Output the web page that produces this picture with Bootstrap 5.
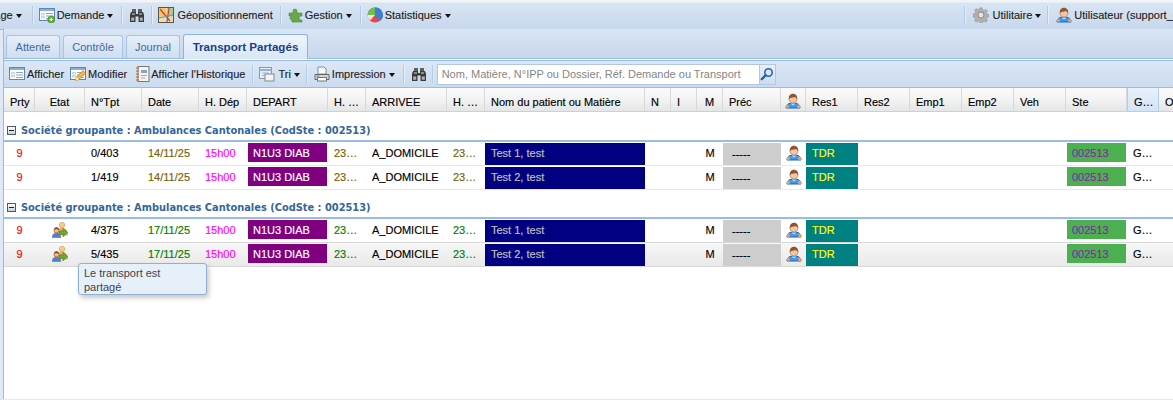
<!DOCTYPE html>
<html lang="fr"><head><meta charset="utf-8"><title>Transport Partagés</title>
<link href="https://cdn.jsdelivr.net/npm/bootstrap@5.3.0/dist/css/bootstrap.min.css" rel="stylesheet">
<style>
html,body{height:400px;overflow:hidden;background:#fff}
body{font:11px/14px "Liberation Sans",Arial,sans-serif;color:#222;position:relative}
.ic{width:16px;height:16px;flex:none;display:block}
.topbar{height:30px;padding:2px 0 1px;background:linear-gradient(#f1f3f6 0,#f1f3f6 2px,#d8e5f4 3px,#c7d7ec 100%);border-bottom:1px solid #99bbe8;white-space:nowrap;overflow:hidden;-webkit-text-stroke:.12px #222}
.mitem{gap:2px;color:#222;font-size:11px}
.gap1{gap:1px}
.dropdown-toggle::after{border-top:4px solid #111;border-left:3px solid transparent;border-right:3px solid transparent;margin-left:3px;vertical-align:1px}
.vsep{width:1px;height:18px;background:#aecbed;box-shadow:1px 0 0 #e6eef8;flex:none}
.first{margin-left:-33px}
.l1{margin-left:1px}.l2{margin-left:2px}.l4{margin-left:4px}.l5{margin-left:5px}.l6{margin-left:6px}.l7{margin-left:7px}.l8{margin-left:8px}.l9{margin-left:9px}.l10{margin-left:10px}.lbig{margin-left:513px}
.frame{position:absolute;left:0;top:30px;right:0;bottom:0;padding-left:3px;background:#dfe8f6}
.inner{border-left:1px solid #99bbe8;height:100%;background:#fff}
.tabstrip.nav-tabs{height:30px;padding:6px 0 0 2px;gap:3px;background:linear-gradient(#d9e5f4,#c7d7ec);border-bottom:1px solid #99bbe8;flex-wrap:nowrap;margin-top:-1px;--bs-nav-tabs-border-width:0}
.tabstrip .nav-link{height:23px;padding:4px 0 0;text-align:center;font-size:11px;color:#416aa3;background:linear-gradient(#e6eef9,#d0def1);border:1px solid #a9c3e6;border-bottom:0;border-radius:3px 3px 0 0;margin:0}
.tabstrip .nav-link.active{height:25px;font-size:11.6px;font-weight:700;color:#15428b;background:linear-gradient(#f0f5fc,#d9e6f6);border-color:#8db2e3;padding-top:5px;margin-top:-1px;position:relative;z-index:1}
.w1{width:54px}.w2{width:60px}.w3{width:54px}.w4{width:125px}
.tbar{height:28px;margin-top:1px;padding-left:5px;border-top:1px solid #99bbe8;border-bottom:1px solid #99bbe8;background:linear-gradient(#dce7f6,#cbdbef);white-space:nowrap;font-size:11px;color:#222;-webkit-text-stroke:.12px #222}
.tbar .vsep{height:18px}
.sbox{width:340px;height:21px;-webkit-text-stroke:0}
.sbox .form-control{flex:none;width:323px;height:21px;min-height:0;padding:0 4px;border:1px solid #b5c7e0;border-radius:0;font-size:11px;box-shadow:none}
.sbox .form-control::placeholder{color:#858585;opacity:1}
.sbox .sbtn{width:17px;height:21px;background:linear-gradient(#e9f0fa,#ccdcf0);border:1px solid #b5c7e0;border-left:0;display:flex;align-items:center;justify-content:center;padding:0}
.gridwrap{overflow:hidden;width:1169px}
.tb{table-layout:fixed;width:1215px;border-collapse:separate;border-spacing:0;font-size:11px;color:#000;-webkit-text-stroke:.15px}
.tb th{height:24px;padding:4px 0 0 6px;font-weight:400;color:#000;font-size:11px;white-space:nowrap;overflow:hidden;background:linear-gradient(#fafafa,#f3f3f3 50%,#e4e5e7);border-right:1px solid #d8d8d8;border-bottom:1px solid #d0d0d0}
.tb th.cur{background:linear-gradient(#e9f1fb,#d4e3f6);border:1px solid #b3cdec;border-top:0}
.tb td{height:24px;padding:1px 0 0 6px;border-bottom:1px solid #e8e8e8;white-space:nowrap;overflow:hidden;vertical-align:top;line-height:21px;font-size:11px}
.tb td.fill{padding:1px 0 0}
.hl td{background:linear-gradient(#f7f7f7,#e9e9e9);border-bottom-color:#d9d9d9}
.prev td{border-bottom-color:#d8d8d8}
.tb .grp td{background:#fff;height:30px;padding:11px 0 0 3px;border-bottom:2px solid #99bbe8;line-height:16px;font-weight:700;color:#336699;font-family:"DejaVu Sans",sans-serif;font-size:9.85px;-webkit-text-stroke:0}
.tb .grp.g2 td{height:29px;padding-top:10px}
.grp .tog{display:inline-block;vertical-align:-1px;width:9px;height:9px;border:1px solid #4a5a70;background:linear-gradient(#fff,#c5cfdc);position:relative;margin-right:5px}
.grp .tog::after{content:"";position:absolute;left:1px;right:1px;top:3px;height:1px;background:#222}
.ctr{text-align:center;padding-left:0!important}
.red{color:#f00}.olive{color:#7b6000}.grn{color:#008000}.mag{color:#f0f}
.bx{height:22px;padding-left:6px;display:block}
.bdep{background:#800080;color:#fff;height:19px;line-height:21px;margin:0 1px;padding-left:5px;overflow:hidden}
.bpat{background:navy;color:#c0c0c0;padding-left:6px}
.bpre{background:#cdcdcd;padding-left:9px;color:#000;line-height:23px}
.bres{background:teal;color:#ff0;padding-left:6px}
.bste{background:#4caf50;color:#8e24aa;height:19px;line-height:21px;margin:0 1px;padding-left:5px;overflow:hidden}
.tb .icell{padding-top:3px;padding-left:0}
.icell .ic{margin:0 auto}
.tip-box{position:absolute;left:78px;top:263px;width:129px;height:32px;padding:2px 5px;background:#e6f0fb;border:1px solid #8fb0d8;border-radius:3px;box-shadow:2px 3px 5px rgba(0,0,0,.22);color:#444;font-size:11px;line-height:13.5px;z-index:5;padding-top:3px}
</style></head><body>
<svg width="0" height="0" class="d-block position-absolute"><defs>
<symbol id="u" viewBox="0 0 16 16"><path d="M1 15c0-3.500 2.500-5 7-5s7 1.500 7 5z" fill="#3f9bf0" stroke="#1d5fb0"/><path d="M5.500 10.500 8 12.500l2.500-2z" fill="#bfe0ff"/><path d="M.8 13.500c.5-1.500 1.500-2 2.500-2.300l.5 3.800H1.500zM15.200 13.500c-.5-1.500-1.500-2-2.500-2.300l-.5 3.800h2.800z" fill="#e8a070"/><circle cx="8" cy="6" r="4" fill="#f3c6a3" stroke="#a9703f" stroke-width=".5"/><path d="M3.800 6.800C3.300 2.300 6 .8 8 .8s4.700 1.500 4.200 6C11.700 4.600 10 4.200 8 4.400S4.300 4.600 3.800 6.800z" fill="#93532a"/></symbol>
<symbol id="bin" viewBox="0 0 16 16"><path d="M3 2h4v3H3zM9 2h4v3H9z" fill="#5f5f5f"/><path d="M2 5h5v2h2V5h5l1 3v7H9.500V9.500h-3V15H1V8z" fill="#3c3c3c"/><path d="M2.200 10.500h3v3.300h-3zM10.800 10.500h3v3.300h-3z" fill="#b2b2b2"/><path d="M3 6h3v2H3zM10 6h3v2h-3z" fill="#8a8a8a"/></symbol>
<symbol id="form" viewBox="0 0 16 16"><rect x=".5" y="1.500" width="15" height="12" fill="#fff" stroke="#5a86bd"/><rect x="1" y="2" width="14" height="2" fill="#88aedb"/><path d="M2.500 6.500h3v1.500h-3zM2.500 9.500h3V11h-3z" fill="#fff" stroke="#8aa" stroke-width=".5"/><path d="M7 6.500h7M7 9h7M7 11.500h7" stroke="#8fa5c0"/></symbol>
<symbol id="fadd" viewBox="0 0 16 16"><use href="#form"/><circle cx="12.300" cy="12.500" r="3.500" fill="#59b13a" stroke="#3d8a25" stroke-width=".6"/><path d="M10.500 12.500h3.600M12.300 10.700v3.600" stroke="#fff" stroke-width="1.200"/></symbol>
<symbol id="fedit" viewBox="0 0 16 16"><use href="#form"/><path d="M5.500 14.800 6.500 11 13 4.500 15.500 7 9 13.500z" fill="#f1b93d" stroke="#a66f12" stroke-width=".6"/><path d="M5.500 14.800 6.500 11 9 13.500z" fill="#fbe6c0"/></symbol>
<symbol id="map" viewBox="0 0 16 16"><rect x=".5" y=".5" width="15" height="15" fill="#e8e0a8" stroke="#555"/><path d="M1 1h6l3 8-9 2z" fill="#f0c868"/><path d="M9 1h6v8l-5 1z" fill="#a9cf8f"/><path d="M2 2l10 12M11 1 9 15" stroke="#d33" stroke-width="1.200" fill="none"/><path d="M1 11l14-3" stroke="#5a9ae0"/></symbol>
<symbol id="puz" viewBox="0 0 16 16"><path d="M1 6h4V4a2 2 0 1 1 4 0v2h5v3h-1a2 2 0 1 0 0 4h1v2H4v-2a2 2 0 1 1 0-4H1z" fill="#66a84a" stroke="#4c8a3a" stroke-width=".6"/></symbol>
<symbol id="pie" viewBox="0 0 16 16"><circle cx="8" cy="8" r="7.500" fill="#e04a4a"/><path d="M8 8V.5A7.500 7.500 0 0 1 13 14z" fill="#3f7fd0"/><path d="M8 8 .5 8A7.500 7.500 0 0 1 8 .5z" fill="#6fc04f"/><path d="M8 8h-7.500A7.500 7.500 0 0 0 3 13.500z" fill="#e8e8e8"/></symbol>
<symbol id="gear" viewBox="0 0 16 16"><path fill="#b0b0b0" stroke="#8a8a8a" stroke-width=".5" d="M6.800.8h2.400l.3 2 1.700.7 1.600-1.200 1.700 1.700-1.200 1.600.7 1.700 2 .3v2.400l-2 .3-.7 1.700 1.200 1.600-1.700 1.700-1.600-1.200-1.700.7-.3 2H6.800l-.3-2-1.700-.7-1.600 1.200-1.700-1.700 1.200-1.600-.7-1.700-2-.3V6.800l2-.3.7-1.700-1.200-1.600 1.700-1.700 1.600 1.200 1.700-.7z"/><circle cx="8" cy="8" r="3" fill="#e4e4e4" stroke="#8a8a8a"/></symbol>
<symbol id="note" viewBox="0 0 16 16"><rect x="3" y=".5" width="11" height="15" fill="#f6f4ec" stroke="#777"/><path d="M1 2h3M1 5h3M1 8h3M1 11h3M1 14h3" stroke="#b5602a" stroke-width="1.200"/><path d="M6 4h6v3H6z" fill="#7ea6dc"/><path d="M6 9.500h6M6 12h4" stroke="#9ab"/></symbol>
<symbol id="tri" viewBox="0 0 16 16"><rect x=".5" y="1.500" width="12" height="11" fill="#e6eef8" stroke="#7f9cc0"/><path d="M.5 4h12" stroke="#8fb0da" stroke-width="2"/><path d="M3 7h7M3 9.500h7" stroke="#a8b8cc"/><rect x="6" y="8" width="9" height="7" fill="#f2f2f2" stroke="#8a8a8a"/></symbol>
<symbol id="prt" viewBox="0 0 16 16"><path d="M4 1h6l2 2v5H4z" fill="#fff" stroke="#6f8fb8"/><path d="M1 8.500h14v5H1z" fill="#d4d4d4" stroke="#666"/><rect x="3.500" y="11.500" width="9" height="3.500" fill="#fff" stroke="#777"/><path d="M2.500 10h3" stroke="#4c8ad0"/></symbol>
<symbol id="srch" viewBox="0 0 14 14"><circle cx="8.500" cy="5.500" r="3.700" fill="#d7e8fa" stroke="#2e62a8" stroke-width="1.600"/><path d="M5.800 8.200 1.800 12.200" stroke="#2e62a8" stroke-width="2.400" stroke-linecap="round"/></symbol>
<symbol id="shr" viewBox="0 0 16 16"><circle cx="10" cy="3" r="2.700" fill="#f4cb94" stroke="#d19a3c" stroke-width=".6"/><path d="M4.500 13c0-5 2.500-7 5.500-7s5.500 2 5.500 7z" fill="#e7b45c" stroke="#c08a30" stroke-width=".4"/><circle cx="4.500" cy="8.500" r="2.500" fill="#efbd98" stroke="#8a4b1f" stroke-width=".6"/><path d="M2 8c0-2.200 1.500-3 2.500-3s2.500.8 2.500 3c-1-.9-4-.9-5 0z" fill="#93532a"/><path d="M0 15.800c0-3.300 1.800-4.800 4.500-4.800S9 12.500 9 15.800z" fill="#4d85cc" stroke="#c9543a" stroke-width=".4"/><path d="M7.500 9H11V6.500L15.800 10.500 11 14.800v-2.600H7.500z" fill="#62ad3d" stroke="#3f8023" stroke-width=".6"/></symbol>
</defs></svg>

<div class="topbar d-flex align-items-center">
 <span class="mitem first dropdown-toggle d-block">Affichage</span>
 <span class="vsep l10"></span>
 <span class="mitem d-flex align-items-center l6"><svg class="ic"><use href="#fadd"/></svg><span class="dropdown-toggle">Demande</span></span>
 <span class="vsep l8"></span>
 <svg class="ic l7"><use href="#bin"/></svg>
 <span class="vsep l6"></span>
 <span class="mitem d-flex align-items-center l6"><svg class="ic"><use href="#map"/></svg><span class="l1">Géopositionnement</span></span>
 <span class="vsep l7"></span>
 <span class="mitem gap1 d-flex align-items-center l7"><svg class="ic"><use href="#puz"/></svg><span class="dropdown-toggle">Gestion</span></span>
 <span class="vsep l8"></span>
 <span class="mitem d-flex align-items-center l6"><svg class="ic"><use href="#pie"/></svg><span class="dropdown-toggle">Statistiques</span></span>
 <span class="vsep lbig"></span>
 <span class="mitem d-flex align-items-center l8"><svg class="ic"><use href="#gear"/></svg><span class="dropdown-toggle l2">Utilitaire</span></span>
 <span class="vsep l6"></span>
 <span class="mitem d-flex align-items-center l8"><svg class="ic"><use href="#u"/></svg>Utilisateur (support_cantonal)</span>
</div>

<div class="frame"><div class="inner">
 <ul class="nav nav-tabs tabstrip">
  <li class="nav-item"><a class="nav-link w1">Attente</a></li>
  <li class="nav-item"><a class="nav-link w2">Contrôle</a></li>
  <li class="nav-item"><a class="nav-link w3">Journal</a></li>
  <li class="nav-item"><a class="nav-link active w4">Transport Partagés</a></li>
 </ul>
 <div class="tbar d-flex align-items-center">
  <span class="d-flex align-items-center mitem"><svg class="ic"><use href="#form"/></svg>Afficher</span>
  <span class="d-flex align-items-center mitem l6"><svg class="ic"><use href="#fedit"/></svg>Modifier</span>
  <span class="d-flex align-items-center l8"><svg class="ic"><use href="#note"/></svg>Afficher l'Historique</span>
  <span class="vsep l7"></span>
  <span class="d-flex align-items-center mitem l6"><svg class="ic"><use href="#tri"/></svg><span class="dropdown-toggle l1">Tri</span></span>
  <span class="vsep l6"></span>
  <span class="d-flex align-items-center mitem l7"><svg class="ic"><use href="#prt"/></svg><span class="dropdown-toggle">Impression</span></span>
  <span class="vsep l8"></span>
  <svg class="ic l7"><use href="#bin"/></svg>
  <span class="vsep l5"></span>
  <div class="input-group sbox flex-nowrap l4"><input class="form-control" placeholder="Nom, Matière, N°IPP ou Dossier, Réf. Demande ou Transport"><span class="sbtn"><svg width="14" height="14"><use href="#srch"/></svg></span></div>
 </div>
 <div class="gridwrap">
 <table class="tb">
  <colgroup><col style="width:31px"><col style="width:50px"><col style="width:57px"><col style="width:57px"><col style="width:48px"><col style="width:81px"><col style="width:38px"><col style="width:81px"><col style="width:38px"><col style="width:160px"><col style="width:26px"><col style="width:26px"><col style="width:26px"><col style="width:58px"><col style="width:25px"><col style="width:52px"><col style="width:52px"><col style="width:52px"><col style="width:52px"><col style="width:52px"><col style="width:61px"><col style="width:32px"><col style="width:60px"></colgroup>
  <thead><tr><th>Prty</th><th class="ctr">Etat</th><th>N°Tpt</th><th>Date</th><th>H. Dép</th><th>DEPART</th><th>H. …</th><th>ARRIVEE</th><th>H. …</th><th>Nom du patient ou Matière</th><th>N</th><th>I</th><th class="ctr">M</th><th>Préc</th><th class="icell"><svg class="ic"><use href="#u"/></svg></th><th>Res1</th><th>Res2</th><th>Emp1</th><th>Emp2</th><th>Veh</th><th>Ste</th><th class="cur">G…</th><th>O</th></tr></thead>
  <tbody id="tbody"></tbody>
 </table>
 </div>
</div></div>
<div class="tip-box">Le transport est<br>partagé</div>
<script>
const grp=(c)=>`<tr class="grp ${c}"><td colspan="23"><span class="tog"></span>Société groupante : Ambulances Cantonales (CodSte : 002513)</td></tr>`;
const row=(n,nom,date,col,sh,cls)=>`<tr class="${cls}"><td class="ctr red">9</td><td class="icell">${sh?'<svg class="ic"><use href="#shr"/></svg>':''}</td><td>${n}</td><td class="${col}">${date}</td><td class="mag">15h00</td><td class="fill"><div class="bdep">N1U3 DIAB</div></td><td class="${col}">23…</td><td>A_DOMICILE</td><td class="${col}">23…</td><td class="fill"><div class="bx bpat">${nom}</div></td><td></td><td></td><td class="ctr">M</td><td class="fill"><div class="bx bpre">-----</div></td><td class="icell"><svg class="ic"><use href="#u"/></svg></td><td class="fill"><div class="bx bres">TDR</div></td><td></td><td></td><td></td><td></td><td class="fill"><div class="bste">002513</div></td><td>G…</td><td></td></tr>`;
document.getElementById('tbody').innerHTML=grp('')+row('0/403','Test 1, test','14/11/25','olive',0,'')+row('1/419','Test 2, test','14/11/25','olive',0,'')+grp('g2')+row('4/375','Test 1, test','17/11/25','grn',1,'prev')+row('5/435','Test 2, test','17/11/25','grn',1,'hl');
</script>
<script src="https://cdn.jsdelivr.net/npm/bootstrap@5.3.0/dist/js/bootstrap.bundle.min.js"></script>
</body></html>
